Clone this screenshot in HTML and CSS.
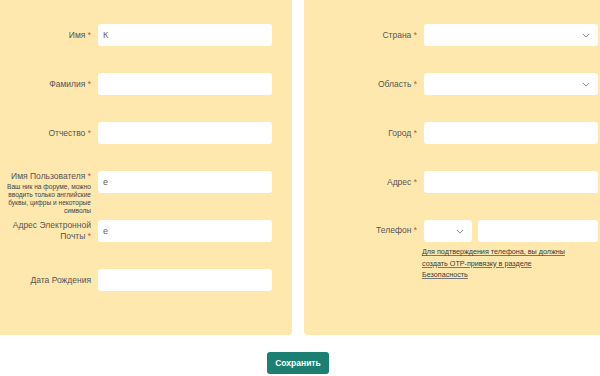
FILE: index.html
```html
<!DOCTYPE html>
<html lang="ru">
<head>
    <meta charset="UTF-8">
    <meta name="viewport" content="width=device-width, initial-scale=1.0">
    <title>Профиль</title>
    <link rel="stylesheet" href="styles.css">
</head>
<body>
    <form class="profile">
        <div class="columns">
            <section class="panel">
                <div class="field">
                    <label class="label">Имя <span class="req">*</span></label>
                    <input class="input" type="text" value="К">
                </div>
                <div class="field">
                    <label class="label">Фамилия <span class="req">*</span></label>
                    <input class="input" type="text">
                </div>
                <div class="field">
                    <label class="label">Отчество <span class="req">*</span></label>
                    <input class="input" type="text">
                </div>
                <div class="field field-top">
                    <label class="label">
                        Имя Пользователя <span class="req">*</span>
                        <small class="hint">Ваш ник на форуме, можно вводить только английские буквы, цифры и некоторые символы</small>
                    </label>
                    <input class="input" type="text" value="е">
                </div>
                <div class="field">
                    <label class="label">Адрес Электронной Почты <span class="req">*</span></label>
                    <input class="input" type="text" value="е">
                </div>
                <div class="field">
                    <label class="label">Дата Рождения</label>
                    <input class="input" type="text">
                </div>
            </section>

            <section class="panel">
                <div class="field">
                    <label class="label">Страна <span class="req">*</span></label>
                    <div class="select">
                        <svg class="chevron" viewBox="0 0 10 6"><path d="M1 1l4 4 4-4" /></svg>
                    </div>
                </div>
                <div class="field">
                    <label class="label">Область <span class="req">*</span></label>
                    <div class="select">
                        <svg class="chevron" viewBox="0 0 10 6"><path d="M1 1l4 4 4-4" /></svg>
                    </div>
                </div>
                <div class="field">
                    <label class="label">Город <span class="req">*</span></label>
                    <input class="input" type="text">
                </div>
                <div class="field">
                    <label class="label">Адрес <span class="req">*</span></label>
                    <input class="input" type="text">
                </div>
                <div class="field field-top">
                    <label class="label label-phone">Телефон <span class="req">*</span></label>
                    <div class="phone">
                        <div class="phone-row">
                            <div class="select select-code">
                                <svg class="chevron" viewBox="0 0 10 6"><path d="M1 1l4 4 4-4" /></svg>
                            </div>
                            <input class="input input-number" type="text">
                        </div>
                        <a class="note" href="#">Для подтверждения телефона, вы должны создать OTP-привязку в разделе Безопасность</a>
                    </div>
                </div>
            </section>
        </div>

        <div class="actions">
            <button class="btn-save" type="button">Сохранить</button>
        </div>
    </form>
</body>
</html>
```

FILE: styles.css
```css
body {
    margin: 0;
    background: #fff;
    font-family: "Liberation Sans", Arial, sans-serif;
    color: #4e4e4e;
    overflow: hidden;
}

.profile {
    width: 640px;
    margin-left: -22px;
}

.columns {
    display: grid;
    grid-template-columns: 314px 314px;
    gap: 12px;
}

.panel {
    background: #ffe8ae;
    border-radius: 0 0 4px 4px;
    padding: 24px 20px 44px 22px;
}

.field {
    display: flex;
    align-items: center;
    gap: 7px;
    height: 22px;
    margin-bottom: 27px;
}

.field:last-child {
    margin-bottom: 0;
}

.field-top {
    align-items: flex-start;
}

.label {
    flex: 0 0 91px;
    text-align: right;
    font-size: 8.5px;
    line-height: 11px;
    color: #555;
}

.label-phone {
    padding-top: 5px;
}

.req {
    color: #e8452f;
}

.hint {
    display: block;
    margin: 1px 0 0 -4px;
    font-size: 6.6px;
    line-height: 8px;
    color: #444;
}

.input,
.select {
    box-sizing: border-box;
    width: 174px;
    height: 22px;
    border: none;
    border-radius: 3px;
    background: #fff;
    padding: 0 5px;
    font-family: inherit;
    font-size: 9px;
    color: #666;
    outline: none;
}

.select {
    display: flex;
    align-items: center;
    justify-content: flex-end;
    padding-right: 8px;
}

.chevron {
    width: 8px;
    height: 5px;
    fill: none;
    stroke: #888;
    stroke-width: 1.2;
}

.phone-row {
    display: flex;
    gap: 6px;
}

.select-code {
    width: 48px;
}

.input-number {
    width: 120px;
}

.note {
    display: block;
    width: 150px;
    margin-top: 4px;
    margin-left: -2px;
    font-size: 7.2px;
    line-height: 11.5px;
    color: #3a3a3a;
    text-decoration: underline;
    text-decoration-color: #777;
}

.actions {
    display: flex;
    justify-content: center;
    padding-top: 17px;
}

.btn-save {
    background: #1b7f72;
    color: #fff;
    border: none;
    border-radius: 3px;
    height: 22px;
    padding: 0 8px;
    font-family: inherit;
    font-size: 8.5px;
    font-weight: bold;
    cursor: pointer;
}
```
